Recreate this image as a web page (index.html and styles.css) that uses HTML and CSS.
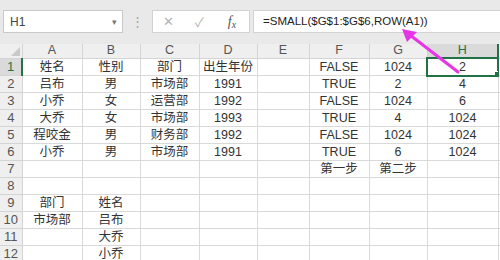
FILE: index.html
```html
<!DOCTYPE html>
<html lang="zh">
<head>
    <meta charset="UTF-8">
    <title>SMALL 函数</title>
    <link rel="stylesheet" href="styles.css">
</head>
<body>
<div class="app">
    <!-- 编辑栏 -->
    <div class="bar">
        <div class="namebox"><span>H1</span><span class="caret">&#9662;</span></div>
        <div class="grip">&#8942;</div>
        <div class="fxbox">
            <span class="btn">&#10005;</span>
            <span class="btn">&#10003;</span>
            <span class="fx">f<sub>x</sub></span>
        </div>
        <div class="formula">=SMALL($G$1:$G$6,ROW(A1))</div>
    </div>

    <!-- 表格 -->
    <table class="sheet">
        <colgroup>
            <col class="c-hd"><col class="c-a"><col class="c-b"><col class="c-c"><col class="c-d">
            <col class="c-e"><col class="c-f"><col class="c-g"><col class="c-h"><col class="c-i">
        </colgroup>
        <tr class="colhd">
            <th class="corner"></th><th>A</th><th>B</th><th>C</th><th>D</th><th>E</th><th>F</th><th>G</th><th class="on">H</th><th></th>
        </tr>
        <tr><th class="on">1</th><td>姓名</td><td>性别</td><td>部门</td><td>出生年份</td><td></td><td>FALSE</td><td>1024</td><td class="sel">2</td><td></td></tr>
        <tr><th>2</th><td>吕布</td><td>男</td><td>市场部</td><td>1991</td><td></td><td>TRUE</td><td>2</td><td>4</td><td></td></tr>
        <tr><th>3</th><td>小乔</td><td>女</td><td>运营部</td><td>1992</td><td></td><td>FALSE</td><td>1024</td><td>6</td><td></td></tr>
        <tr><th>4</th><td>大乔</td><td>女</td><td>市场部</td><td>1993</td><td></td><td>TRUE</td><td>4</td><td>1024</td><td></td></tr>
        <tr><th>5</th><td>程咬金</td><td>男</td><td>财务部</td><td>1992</td><td></td><td>FALSE</td><td>1024</td><td>1024</td><td></td></tr>
        <tr><th>6</th><td>小乔</td><td>男</td><td>市场部</td><td>1991</td><td></td><td>TRUE</td><td>6</td><td>1024</td><td></td></tr>
        <tr><th>7</th><td></td><td></td><td></td><td></td><td></td><td>第一步</td><td>第二步</td><td></td><td></td></tr>
        <tr><th>8</th><td></td><td></td><td></td><td></td><td></td><td></td><td></td><td></td><td></td></tr>
        <tr><th>9</th><td>部门</td><td>姓名</td><td></td><td></td><td></td><td></td><td></td><td></td><td></td></tr>
        <tr><th>10</th><td>市场部</td><td>吕布</td><td></td><td></td><td></td><td></td><td></td><td></td><td></td></tr>
        <tr><th>11</th><td></td><td>大乔</td><td></td><td></td><td></td><td></td><td></td><td></td><td></td></tr>
        <tr><th>12</th><td></td><td>小乔</td><td></td><td></td><td></td><td></td><td></td><td></td><td></td></tr>
    </table>

    <!-- 标注箭头 -->
    <svg class="arrow" width="500" height="260" viewBox="0 0 500 260">
        <line x1="458" y1="72" x2="410" y2="35" stroke="#e535e5" stroke-width="3" stroke-linecap="round"/>
        <polygon points="402,29 417,32 407,42" fill="#e535e5"/>
    </svg>
</div>
</body>
</html>
```

FILE: styles.css
```css
*{
    box-sizing: border-box;
}
body{
    margin: 0;
    background-color: #e9e9e9;
    font-family: "Liberation Sans", "Noto Sans CJK SC", sans-serif;
    color: #333;
}
.app{
    position: relative;
    width: 500px;
    height: 260px;
    overflow: hidden;
}

/* 编辑栏 */
.bar{
    display: flex;
    align-items: center;
    height: 23px;
    margin: 10px 0 11px 3px;
}
.namebox{
    display: flex;
    align-items: center;
    justify-content: space-between;
    width: 120px;
    height: 100%;
    padding: 0 5px 0 6px;
    background-color: #fff;
    border: 1px solid #c9c9c9;
    font-size: 12px;
    color: #444;
}
.caret{
    font-size: 9px;
    color: #777;
}
.grip{
    width: 29px;
    text-align: center;
    font-size: 13px;
    color: #a8a8a8;
}
.fxbox{
    display: flex;
    align-items: center;
    width: 98px;
    height: 100%;
    background-color: #fff;
    border: 1px solid #d2d2d2;
}
.btn{
    width: 31px;
    text-align: center;
    font-size: 13px;
    color: #b4b4b4;
}
.fx{
    width: 34px;
    text-align: center;
    font-family: "Liberation Serif", serif;
    font-style: italic;
    font-size: 14px;
    color: #555;
}
.fx sub{
    font-size: 10px;
    vertical-align: -2px;
}
.formula{
    flex: 1;
    height: 100%;
    margin-left: 3px;
    padding-left: 9px;
    background-color: #fff;
    border: 1px solid #d2d2d2;
    border-right: 0;
    font-size: 11.5px;
    line-height: 21px;
    color: #222;
}

/* 表格 */
.sheet{
    border-collapse: collapse;
    table-layout: fixed;
    width: 520px;
    background-color: #fff;
    font-size: 12.5px;
}
.c-hd{ width: 22px; }
.c-a{ width: 60px; }
.c-b{ width: 58px; }
.c-c{ width: 59px; }
.c-d{ width: 58px; }
.c-e{ width: 52px; }
.c-f{ width: 60px; }
.c-g{ width: 58px; }
.c-h{ width: 71px; }
.c-i{ width: 22px; }

.sheet td,
.sheet th{
    height: 16px;
    padding: 0;
    border: 1px solid #d9d9d9;
    text-align: center;
    white-space: nowrap;
    overflow: hidden;
    line-height: 16px;
}
.sheet th{
    background-color: #efefef;
    border-color: #d4d4d4;
    font-weight: normal;
    font-size: 13px;
    color: #555;
}
.colhd th{
    height: 13px;
    line-height: 13px;
    font-size: 12.5px;
    border-top: 0;
}
.sheet tr > th:first-child{
    border-left: 0;
}
.corner{
    position: relative;
}
.corner::after{
    content: "";
    position: absolute;
    right: 2px;
    bottom: 2px;
    border-left: 9px solid transparent;
    border-bottom: 9px solid #c9c9c9;
}
/* 선택 표시 */
.colhd th.on{
    background-color: #dadada;
    border-bottom: 2px solid #217346;
    color: #217346;
}
tr > th.on{
    background-color: #dadada;
    border-right: 2px solid #217346;
    color: #217346;
}
.sel{
    position: relative;
    outline: 2px solid #217346;
    outline-offset: -1px;
}
.sel::after{
    content: "";
    position: absolute;
    right: -3px;
    bottom: -3px;
    width: 5px;
    height: 5px;
    background-color: #217346;
    border: 1px solid #fff;
}

/* 标注箭头 */
.arrow{
    position: absolute;
    top: 0;
    left: 0;
    pointer-events: none;
}
```
